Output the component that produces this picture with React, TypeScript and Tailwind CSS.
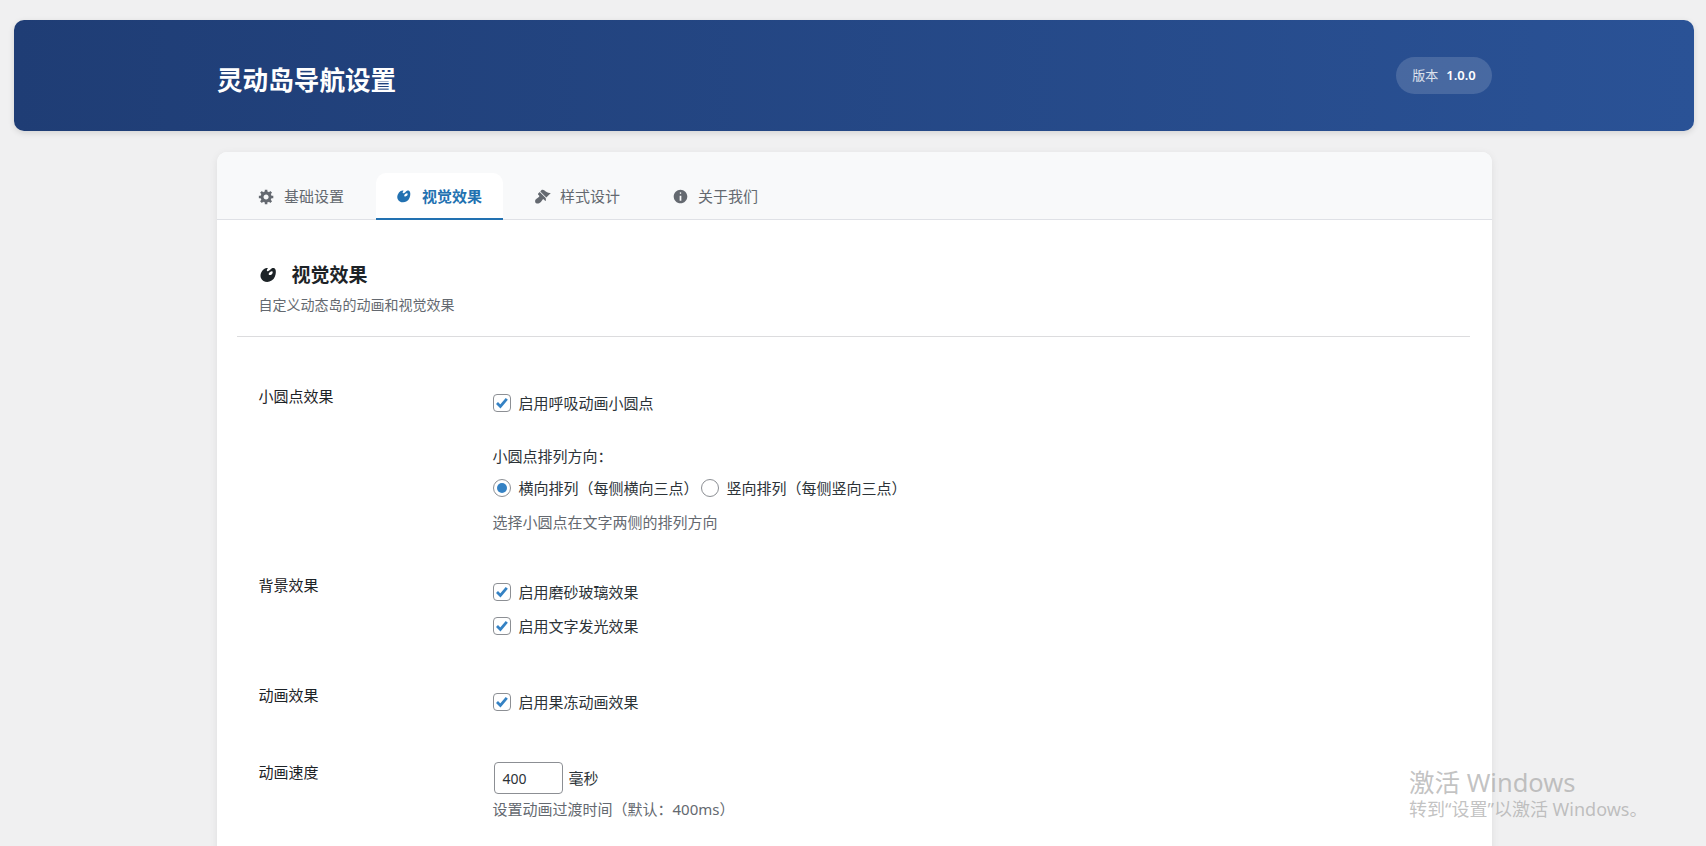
import { useState } from "react";

const font = "font-['Noto_Sans','Noto_Sans_CJK_SC',sans-serif]";

function GearIcon({ className }: { className?: string }) {
  return (
    <svg viewBox="0 0 20 20" className={className} fill="currentColor">
      <path d="M18 12h-2.18c-.17.7-.44 1.35-.81 1.93l1.54 1.54-2.1 2.1-1.54-1.54c-.58.36-1.23.63-1.91.79V19H8v-2.18c-.68-.16-1.33-.43-1.91-.79l-1.54 1.54-2.12-2.12 1.54-1.54c-.36-.58-.63-1.23-.79-1.91H1V9.03h2.17c.16-.7.44-1.35.8-1.94L2.43 5.55l2.1-2.1 1.54 1.54c.58-.37 1.24-.64 1.93-.81V2h3v2.18c.68.16 1.33.43 1.91.79l1.54-1.54 2.12 2.12-1.54 1.54c.36.59.64 1.24.8 1.94H18V12zm-8.5 1.5c1.66 0 3-1.34 3-3s-1.34-3-3-3-3 1.34-3 3 1.34 3 3 3z" />
    </svg>
  );
}

function ArtIcon({ className }: { className?: string }) {
  return (
    <svg viewBox="0 0 20 20" className={className} fill="currentColor">
      <path d="M8.55 3.06c1.01.34-1.95 2.01-.1 3.13 1.04.63 3.31-2.22 4.45-2.86.97-.54 2.67-.65 3.53 1.23 1.09 2.38.14 8.57-3.79 11.06-3.97 2.5-8.97 1.23-10.7-2.66-2.01-4.53 3.12-11.09 6.61-9.9zm1.21 6.45c.73 1.64 4.7-.5 3.79-2.8-.59-1.49-4.48 1.25-3.79 2.8z" />
    </svg>
  );
}

function BrushIcon({ className }: { className?: string }) {
  return (
    <svg viewBox="0 0 20 20" className={className} fill="currentColor">
      <path d="M14.48 11.06L7.41 3.99l1.5-1.5c.5-.56 2.3-.47 3.51.32 1.21.8 1.43 1.28 2.91 2.1 1.18.64 2.45 1.26 4.45.85zm-.71.71L6.7 4.7 4.93 6.47c-.39.39-.39 1.02 0 1.41l1.06 1.06c.39.39.39 1.03 0 1.42-.6.6-1.43 1.11-2.21 1.69-.35.26-.7.53-1.01.84C1.43 13.23.99 15.4 1.62 17.06c.14.37.56.8.92.93 1.68.59 3.84.16 5.16-1.16.31-.31.58-.66.84-1.02.58-.78 1.09-1.61 1.69-2.21.39-.39 1.03-.39 1.42 0l1.06 1.06c.39.39 1.02.39 1.41 0z" />
    </svg>
  );
}

function InfoIcon({ className }: { className?: string }) {
  return (
    <svg viewBox="0 0 20 20" className={className} fill="currentColor">
      <path d="M10 2c4.42 0 8 3.58 8 8s-3.58 8-8 8-8-3.58-8-8 3.58-8 8-8zm1 4c0-.55-.45-1-1-1s-1 .45-1 1 .45 1 1 1 1-.45 1-1zm0 9V9H9v6h2z" />
    </svg>
  );
}

const tabs = [
  { label: "基础设置", Icon: GearIcon },
  { label: "视觉效果", Icon: ArtIcon },
  { label: "样式设计", Icon: BrushIcon },
  { label: "关于我们", Icon: InfoIcon },
];

function Check({ label, className }: { label: string; className?: string }) {
  return (
    <label className={`flex items-center h-[20px] text-[15px] text-[#2c3338] ${className ?? ""}`}>
      <span className="w-[18px] h-[18px] mr-[8px] rounded-[4px] border border-[#8c8f94] bg-white flex items-center justify-center">
        <svg viewBox="0 0 16 16" className="w-[16px] h-[16px]" fill="none" stroke="#3582c4" strokeWidth="2.8">
          <path d="M3 8l3.4 3.4 6.4-7.6" />
        </svg>
      </span>
      {label}
    </label>
  );
}

function Radio({ label, checked }: { label: string; checked?: boolean }) {
  return (
    <label className="flex items-center h-[20px] text-[15px] text-[#2c3338]">
      <span className="w-[18px] h-[18px] mr-[8px] rounded-full border border-[#8c8f94] bg-white flex items-center justify-center">
        {checked && <span className="w-[10px] h-[10px] rounded-full bg-[#3582c4]" />}
      </span>
      {label}
    </label>
  );
}

function Row({ label, children, className }: { label: string; children: React.ReactNode; className?: string }) {
  return (
    <div className={`flex ${className ?? ""}`}>
      <div className="w-[234px] shrink-0 text-[15px] leading-[20px] text-[#1d2327]">{label}</div>
      <div>{children}</div>
    </div>
  );
}

export default function App() {
  const [active] = useState(1);

  return (
    <div className={`relative h-[846px] overflow-hidden bg-[#f0f0f1] pt-[20px] pl-[14px] pr-[12px] ${font}`}>
      <header className="h-[111px] rounded-[10px] bg-gradient-to-r from-[#1f3d75] to-[#2a5296] shadow-[0_2px_6px_rgba(0,0,0,0.12)] pl-[203px] pr-[202px] flex items-center justify-between">
        <h1 className="pt-[12px] text-[25.6px] font-bold text-white">灵动岛导航设置</h1>
        <div className="h-[37px] w-[96px] rounded-full bg-white/15 flex items-center justify-center gap-[8px] text-[13px] text-white/80">
          版本 <span className="font-semibold text-white">1.0.0</span>
        </div>
      </header>

      <main className="mt-[21px] mx-auto w-[1275px] h-[800px] rounded-[10px] bg-white shadow-[0_2px_8px_rgba(0,0,0,0.08)]">
        <nav className="h-[68px] rounded-t-[10px] bg-[#f8f9fa] border-b border-[#dfe1e6] flex items-end gap-[11px] px-[21px]">
          {tabs.map(({ label, Icon }, i) => (
            <div
              key={label}
              className={
                i === active
                  ? "h-[47px] -mb-px pt-[2px] w-[127px] rounded-t-[10px] bg-white border-b-2 border-[#2271b1] flex items-center justify-center gap-[9px] text-[15px] font-semibold text-[#2271b1]"
                  : "h-[47px] pt-[2px] w-[127px] flex items-center justify-center gap-[9px] text-[15px] text-[#646970]"
              }
            >
              <Icon className="w-[17px] h-[17px]" />
              {label}
            </div>
          ))}
        </nav>

        <section className="pl-[20px] pr-[22px]">
          <div className="pt-[41px] pb-[21px] px-[22px] border-b border-[#dcdcde]">
            <h2 className="flex items-center gap-[13px] text-[19px] leading-[28px] font-semibold text-[#1d2327]">
              <ArtIcon className="w-[20px] h-[20px]" />
              视觉效果
            </h2>
            <p className="mt-[6px] text-[14px] leading-[20px] text-[#646970]">自定义动态岛的动画和视觉效果</p>
          </div>

          <div className="px-[22px] pt-[49px]">
            <Row label="小圆点效果">
              <Check label="启用呼吸动画小圆点" className="mt-[7px]" />
              <div className="mt-[33px] text-[15px] leading-[20px] text-[#2c3338]">小圆点排列方向：</div>
              <div className="mt-[12px] flex gap-[2px]">
                <Radio label="横向排列（每侧横向三点）" checked />
                <Radio label="竖向排列（每侧竖向三点）" />
              </div>
              <p className="mt-[14px] text-[15px] leading-[20px] text-[#646970]">选择小圆点在文字两侧的排列方向</p>
            </Row>
            <Row label="背景效果" className="mt-[43px]">
              <Check label="启用磨砂玻璃效果" className="mt-[7px]" />
              <Check label="启用文字发光效果" className="mt-[14px]" />
            </Row>
            <Row label="动画效果" className="mt-[49px]">
              <Check label="启用果冻动画效果" className="mt-[7px]" />
            </Row>
            <Row label="动画速度" className="mt-[50px]">
              <div className="flex items-center ml-[1px]">
                <div className="w-[69px] h-[32px] rounded-[4px] border border-[#8c8f94] px-[8px] flex items-center text-[14px] text-[#2c3338]">400</div>
                <span className="ml-[6px] text-[15px] text-[#2c3338]">毫秒</span>
              </div>
              <p className="mt-[5px] text-[15px] leading-[20px] text-[#646970]">设置动画过渡时间（默认：400ms）</p>
            </Row>
          </div>
        </section>
      </main>

      <div className="absolute left-[1409px] top-[767px] text-[#a8a8a8]/70 pointer-events-none">
        <div className="text-[25.5px] leading-[30px]">激活 Windows</div>
        <div className="text-[18px] leading-[24px]">转到“设置”以激活 Windows。</div>
      </div>
    </div>
  );
}
